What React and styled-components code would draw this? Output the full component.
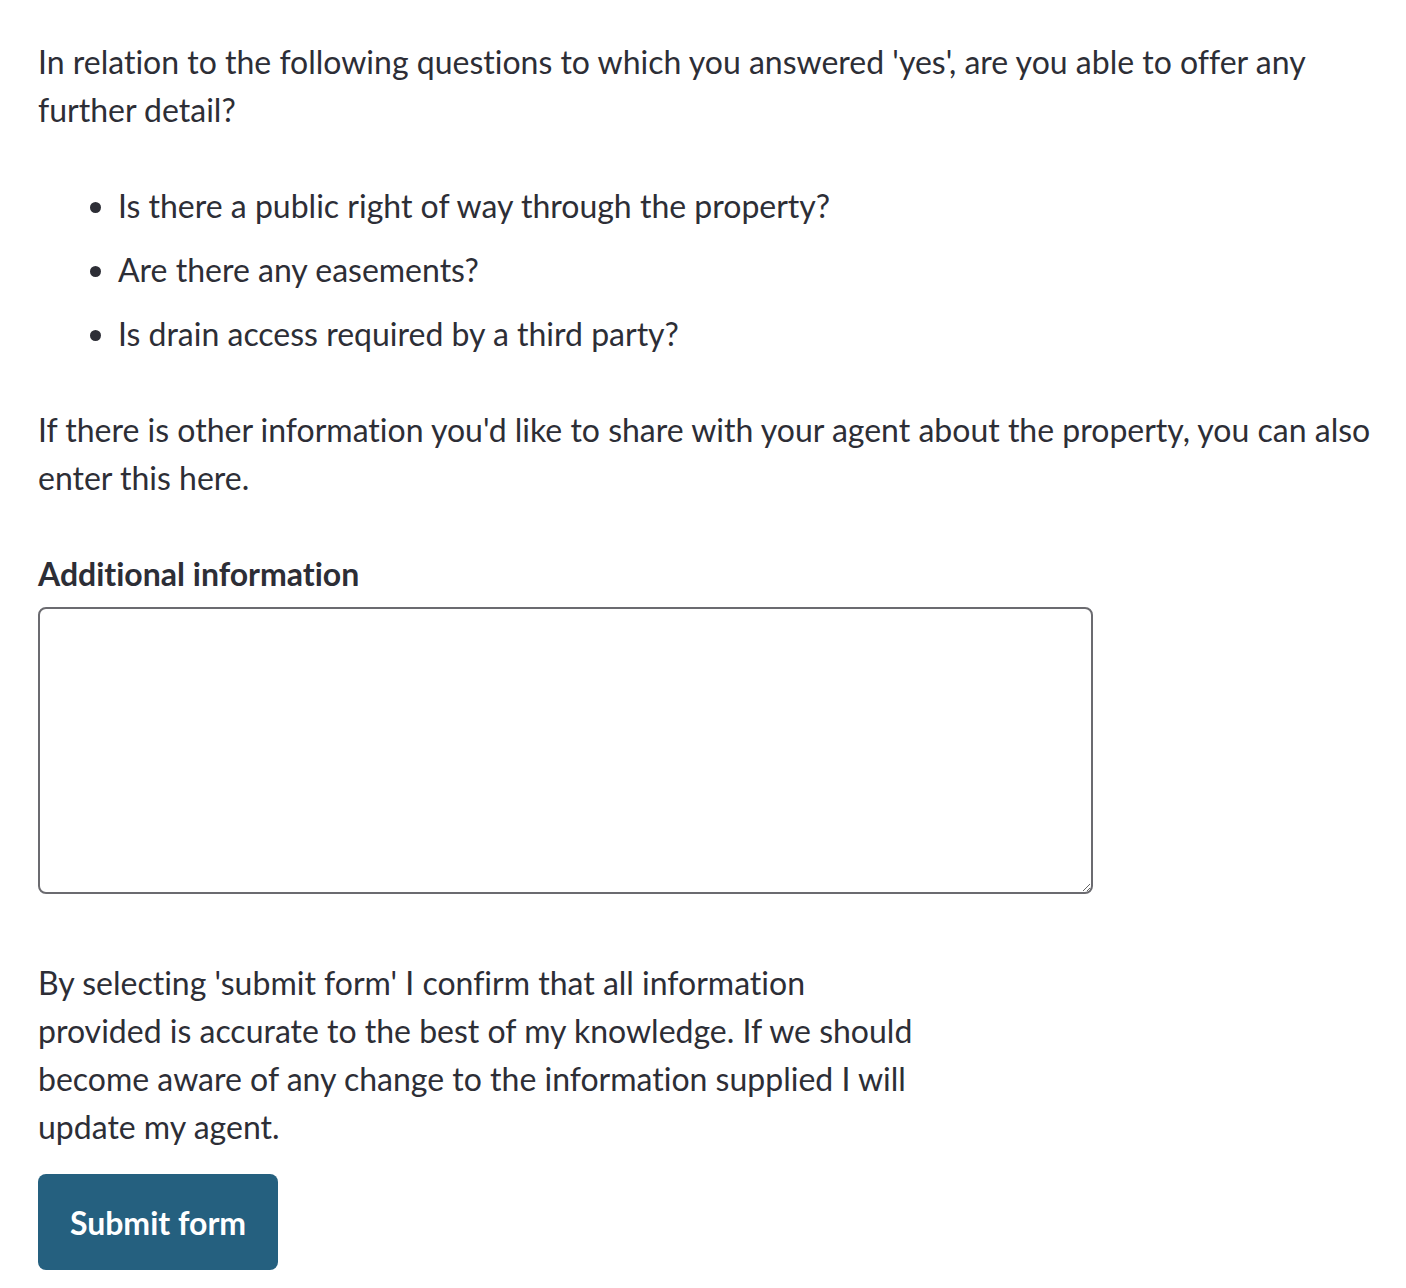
import React, { useState } from 'react';
import styled, { createGlobalStyle } from 'styled-components';

const GlobalStyle = createGlobalStyle`
  body {
    margin: 0;
    background: #ffffff;
    font-family: Lato, "Open Sans", sans-serif;
    color: #2d2e36;
  }
`;

const questions = [
  'Is there a public right of way through the property?',
  'Are there any easements?',
  'Is drain access required by a third party?',
];

const App = () => {
  const [details, setDetails] = useState('');

  const handleSubmit = (event) => {
    event.preventDefault();
  };

  return (
    <>
      <GlobalStyle />
      <Page onSubmit={handleSubmit}>
        <Text>
          In relation to the following questions to which you answered 'yes', are you able to offer any further detail?
        </Text>
        <QuestionList>
          {questions.map((q) => (
            <Question key={q}>{q}</Question>
          ))}
        </QuestionList>
        <Text>
          If there is other information you'd like to share with your agent about the property, you can also enter this here.
        </Text>
        <Field>
          <Label htmlFor="additional">Additional information</Label>
          <TextArea
            id="additional"
            name="additional"
            value={details}
            onChange={(e) => setDetails(e.target.value)}
          />
        </Field>
        <Confirm>
          By selecting 'submit form' I confirm that all information provided is accurate to the best of my knowledge. If we should become aware of any change to the information supplied I will update my agent.
        </Confirm>
        <SubmitButton type="submit">Submit form</SubmitButton>
      </Page>
    </>
  );
};

const Page = styled.form`
  display: flex;
  flex-direction: column;
  align-items: flex-start;
  padding: 38px 30px 18px 38px;
  font-size: 32px;
  line-height: 48px;
  font-variant-ligatures: no-common-ligatures;
`;

const Text = styled.p`
  margin: 0 0 48px 0;
`;

const QuestionList = styled.ul`
  margin: 0 0 48px 0;
  padding-left: 80px;
  display: flex;
  flex-direction: column;
  gap: 16px;
`;

const Question = styled.li`
  padding-left: 0;
`;

const Field = styled.div`
  display: flex;
  flex-direction: column;
  gap: 9px;
  width: 1055px;
  margin-bottom: 65px;
`;

const Label = styled.label`
  font-weight: 700;
`;

const TextArea = styled.textarea`
  box-sizing: border-box;
  width: 100%;
  height: 287px;
  border: 2px solid #6b6b70;
  border-radius: 8px;
  padding: 12px 16px;
  font-family: inherit;
  font-size: 32px;
  color: inherit;
  resize: vertical;
  outline: none;
`;

const Confirm = styled.p`
  margin: 0 0 23px 0;
  max-width: 880px;
`;

const SubmitButton = styled.button`
  width: 240px;
  height: 96px;
  border: none;
  border-radius: 8px;
  background: #25607f;
  color: #ffffff;
  font-family: inherit;
  font-size: 32px;
  font-weight: 700;
  cursor: pointer;
`;

export default App;
